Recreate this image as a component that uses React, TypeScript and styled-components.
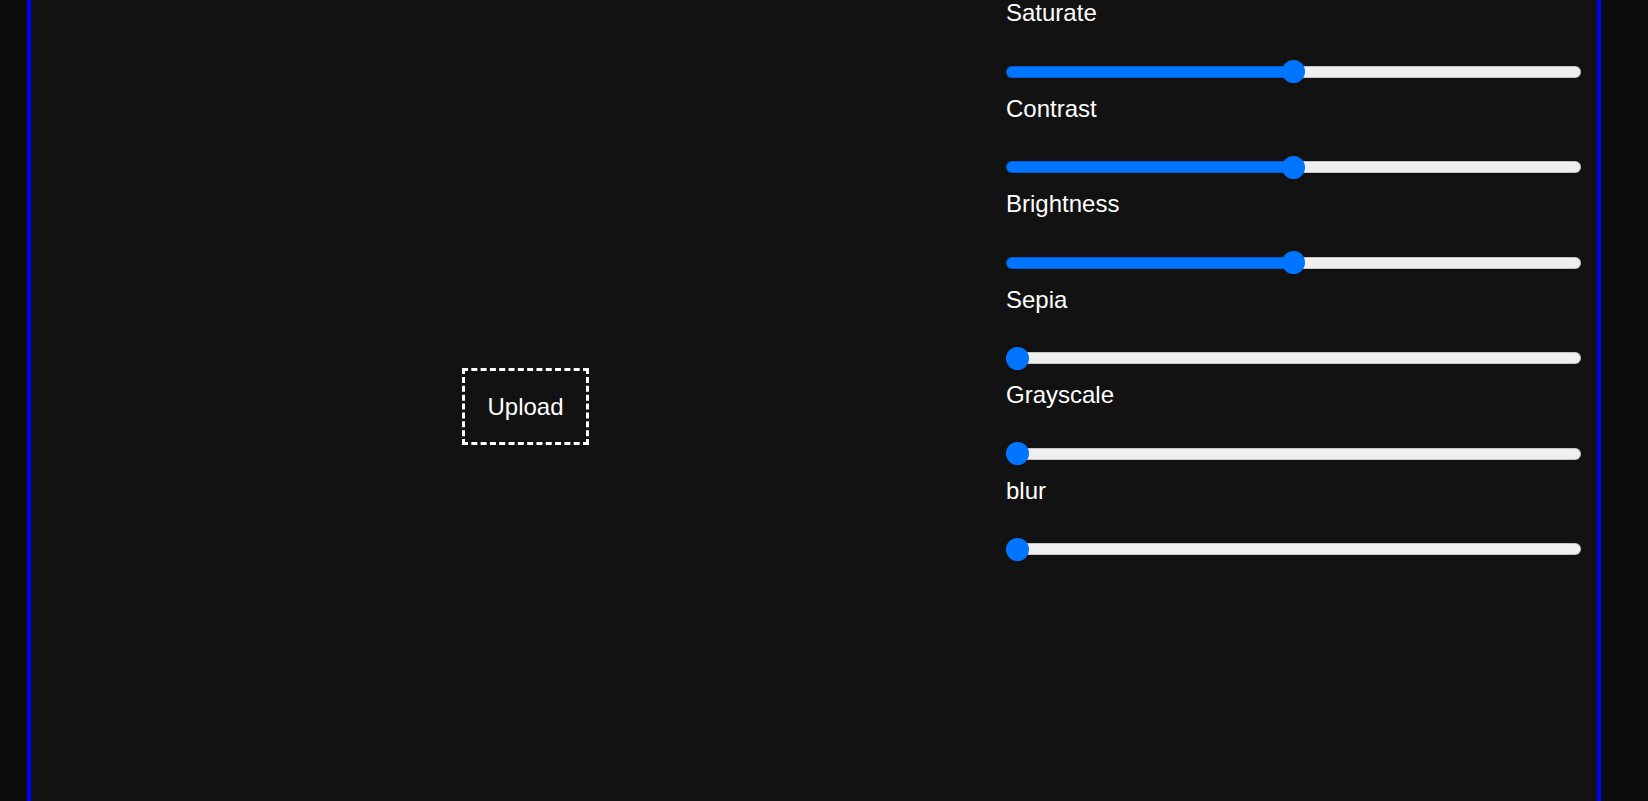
import React, { useState } from "react";
import styled, { createGlobalStyle } from "styled-components";

const GlobalStyle = createGlobalStyle`
  html, body {
    margin: 0;
    padding: 0;
    background: #0c0c0c;
    overflow: hidden;
  }
  body {
    font-family: "Liberation Sans", Arial, sans-serif;
    color: #ffffff;
  }
`;

const Frame = styled.main`
  display: flex;
  box-sizing: border-box;
  width: 1574px;
  height: 801px;
  margin-left: 27px;
  background: #121212;
  border-left: 4px solid #0000ff;
  border-right: 4px solid #0000ff;
`;

const Preview = styled.section`
  flex: 1;
  display: flex;
  align-items: center;
  justify-content: center;
  padding: 12px 0 0 14px;
`;

const UploadBox = styled.label`
  display: inline-block;
  padding: 22px 22px 21px;
  border: 3px dashed #ffffff;
  font-size: 24px;
  line-height: 28px;
  color: #ffffff;
  cursor: pointer;

  input {
    display: none;
  }
`;

const Controls = styled.aside`
  width: 575px;
  margin-right: 16px;
  margin-top: -1px;
  display: flex;
  flex-direction: column;
`;

const Field = styled.div`
  display: flex;
  flex-direction: column;
  height: 95.5px;
`;

const FieldLabel = styled.label`
  font-size: 24px;
  line-height: 27px;
  color: #ffffff;
`;

const Range = styled.input<{ $pct: number }>`
  -webkit-appearance: none;
  appearance: none;
  width: 100%;
  height: 23px;
  margin: 34px 0 0;
  padding: 0;
  background: transparent;
  cursor: pointer;

  &::-webkit-slider-runnable-track {
    height: 12px;
    border-radius: 6px;
    background: linear-gradient(
      to right,
      #0075ff calc(11.5px + (100% - 23px) * ${(p) => p.$pct / 100}),
      #efefef 0
    );
    box-shadow: inset 0 0 0 1px rgba(0, 0, 0, 0.18);
  }

  &::-webkit-slider-thumb {
    -webkit-appearance: none;
    width: 23px;
    height: 23px;
    margin-top: -5.5px;
    border-radius: 50%;
    background: #0075ff;
    border: none;
  }
`;

const filters = [
  { key: "saturate", label: "Saturate", value: 50 },
  { key: "contrast", label: "Contrast", value: 50 },
  { key: "brightness", label: "Brightness", value: 50 },
  { key: "sepia", label: "Sepia", value: 0 },
  { key: "grayscale", label: "Grayscale", value: 0 },
  { key: "blur", label: "blur", value: 0 },
];

export default function App() {
  const [values, setValues] = useState<Record<string, number>>(
    Object.fromEntries(filters.map((f) => [f.key, f.value]))
  );

  return (
    <>
      <GlobalStyle />
      <Frame>
        <Preview>
          <UploadBox>
            Upload
            <input type="file" accept="image/*" />
          </UploadBox>
        </Preview>
        <Controls>
          {filters.map((f) => (
            <Field key={f.key}>
              <FieldLabel htmlFor={f.key}>{f.label}</FieldLabel>
              <Range
                id={f.key}
                type="range"
                min={0}
                max={100}
                value={values[f.key]}
                $pct={values[f.key]}
                onChange={(e) =>
                  setValues({ ...values, [f.key]: Number(e.target.value) })
                }
              />
            </Field>
          ))}
        </Controls>
      </Frame>
    </>
  );
}
